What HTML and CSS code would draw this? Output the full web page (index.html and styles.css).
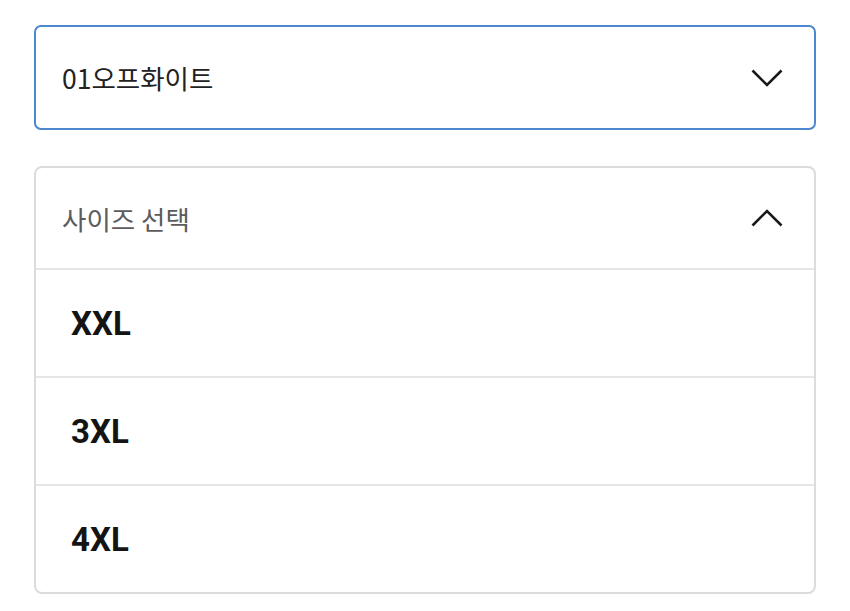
FILE: index.html
```html
<!DOCTYPE html>
<html>
<head>
    <title>Option Select</title>
    <link rel="stylesheet" href="styles.css">
</head>
<body>
    <div class="options">
        <div class="select selected">
            <span class="select-label">01오프화이트</span>
            <svg class="chevron" width="32" height="18" viewBox="0 0 32 18">
                <polyline points="1.5,1.5 16,16 30.5,1.5" fill="none" stroke="#1a1a1a" stroke-width="2.6"/>
            </svg>
        </div>

        <div class="dropdown">
            <div class="select dropdown-head">
                <span class="select-label placeholder">사이즈 선택</span>
                <svg class="chevron" width="32" height="18" viewBox="0 0 32 18">
                    <polyline points="1.5,16.5 16,2 30.5,16.5" fill="none" stroke="#1a1a1a" stroke-width="2.6"/>
                </svg>
            </div>
            <div class="item">XXL</div>
            <div class="item">3XL</div>
            <div class="item">4XL</div>
        </div>
    </div>
</body>
</html>
```

FILE: styles.css
```css
body {
    margin: 0;
    background-color: #fff;
    font-family: "Noto Sans CJK KR", Roboto, "Noto Sans", sans-serif;
}
.options {
    padding: 25px 34px 0;
    display: flex;
    flex-direction: column;
    gap: 36px;
}
.select {
    display: flex;
    align-items: center;
    justify-content: space-between;
    padding: 0 31px 0 26px;
}
.selected {
    height: 101px;
    border: 2px solid #4d87cf;
    border-radius: 7px;
}
.select-label {
    font-size: 26.5px;
    letter-spacing: 0;
    color: #222;
}
.placeholder {
    color: #5c5c5c;
}
.chevron {
    display: block;
}
.dropdown {
    border: 2px solid #dcdcdc;
    border-radius: 8px;
}
.dropdown-head {
    height: 100px;
}
.item {
    height: 106px;
    border-top: 2px solid #e6e6e6;
    padding-left: 35px;
    display: flex;
    align-items: center;
    font-family: Roboto, "Noto Sans CJK KR", sans-serif;
    font-weight: bold;
    font-size: 33px;
    color: #141414;
}
```
